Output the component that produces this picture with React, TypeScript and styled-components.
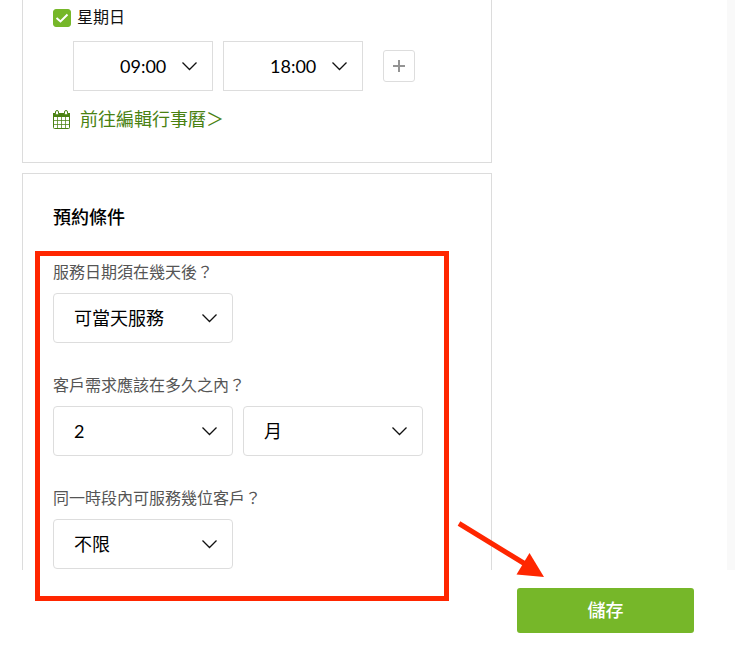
import React, { useState } from "react";
import styled, { createGlobalStyle } from "styled-components";

const GlobalStyle = createGlobalStyle`
  *, *::before, *::after { box-sizing: border-box; }
  body {
    margin: 0;
    background: #fff;
    color: #111;
    font-family: Lato, "Noto Sans CJK TC", sans-serif;
    font-size: 16px;
    line-height: 24px;
  }
  button, select, input { font-family: inherit; }
`;

const Page = styled.div`
  position: relative;
  display: flex;
  flex-direction: column;
  height: 100vh;
  overflow: hidden;
`;

const Body = styled.div`
  display: flex;
  flex: 1;
  min-height: 0;
  overflow: hidden;
`;

const Content = styled.main`
  display: flex;
  flex: 1;
  flex-direction: column;
  gap: 10px;
  padding: 0 22px;
`;

const Gutter = styled.div`
  width: 8px;
  background: #f9f9f9;
`;

const Card = styled.section<{ $continued?: boolean }>`
  width: 100%;
  max-width: 470px;
  flex-shrink: 0;
  padding: ${(p) => (p.$continued ? "5px 30px 31px" : "29px 30px 31px")};
  border: 1px solid #dcdcdc;
  border-top-width: ${(p) => (p.$continued ? "0" : "1px")};
  background: #fff;
`;

const DayLabel = styled.label`
  display: flex;
  align-items: flex-end;
  gap: 6px;
`;

const CheckWrap = styled.span`
  display: grid;
  width: 18px;
  height: 20px;
  > * { grid-area: 1 / 1; }
  svg { pointer-events: none; }
`;

const CheckInput = styled.input`
  appearance: none;
  width: 18px;
  height: 18px;
  margin: 0;
  border: 1px solid #76b729;
  border-radius: 3px;
  background: #fff;
  &:checked { background: #76b729; }
`;

const TimeRow = styled.div`
  display: flex;
  align-items: center;
  gap: 10px;
  padding: 12px 20px 16px;
`;

const SelectWrap = styled.span<{ $width: number }>`
  display: grid;
  align-items: center;
  width: ${(p) => p.$width}px;
  > * { grid-area: 1 / 1; }
  svg {
    justify-self: end;
    margin-right: 15px;
    pointer-events: none;
  }
`;

const SelectBox = styled.select<{ $time?: boolean }>`
  appearance: none;
  width: 100%;
  height: 50px;
  padding: 0 36px 0 ${(p) => (p.$time ? "46px" : "20px")};
  border: 1px solid #ddd;
  border-radius: ${(p) => (p.$time ? "0" : "4px")};
  background: #fff;
  color: #000;
  font-size: 18px;
`;

const AddButton = styled.button`
  display: grid;
  place-items: center;
  width: 32px;
  height: 32px;
  margin-left: 10px;
  padding: 0;
  border: 1px solid #ddd;
  border-radius: 3px;
  background: #fff;
  color: #888;
`;

const CalendarLink = styled.a`
  display: inline-flex;
  align-items: center;
  gap: 9px;
  color: #4a8212;
  font-size: 18px;
  text-decoration: none;
  vertical-align: top;
`;

const Title = styled.h2`
  margin: 0 0 29px;
  color: #000;
  font-size: 18px;
  font-weight: 500;
  line-height: 28px;
`;

const Fields = styled.div`
  display: flex;
  flex-direction: column;
  gap: 30px;
`;

const Field = styled.div`
  display: flex;
  flex-direction: column;
  gap: 9px;
`;

const FieldLabel = styled.label`
  color: #555;
`;

const FieldRow = styled.div`
  display: flex;
  gap: 10px;
`;

const Footer = styled.footer`
  display: flex;
  justify-content: flex-end;
  padding: 18px 41px 14px;
`;

const SaveButton = styled.button`
  width: 177px;
  height: 45px;
  padding: 0 0 3px;
  border: 0;
  border-radius: 3px;
  background: #76b729;
  color: #fff;
  font-size: 18px;
  font-weight: 500;
`;

const Highlight = styled.div`
  position: absolute;
  top: 251px;
  left: 35px;
  width: 414px;
  height: 350px;
  border: 5px solid #ff2600;
  pointer-events: none;
`;

const Arrow = styled.svg`
  position: absolute;
  top: 520px;
  left: 456px;
  pointer-events: none;
`;

type PickerProps = {
  id?: string;
  label?: string;
  options: string[];
  width: number;
  time?: boolean;
};

function Picker({ id, label, options, width, time }: PickerProps) {
  const [value, setValue] = useState(options[0]);
  return (
    <SelectWrap $width={width}>
      <SelectBox
        id={id}
        aria-label={label}
        $time={time}
        value={value}
        onChange={(e) => setValue(e.target.value)}
      >
        {options.map((o) => (
          <option key={o}>{o}</option>
        ))}
      </SelectBox>
      <svg width="17" height="10" viewBox="0 0 17 10" fill="none" aria-hidden="true">
        <path d="M1.5 1.5 8.5 8.5 15.5 1.5" stroke="#111" strokeWidth="1.3" />
      </svg>
    </SelectWrap>
  );
}

function CalendarIcon() {
  return (
    <svg width="18" height="19" viewBox="0 0 18 19" fill="none" aria-hidden="true">
      <path d="M0 3h17v4H0z" fill="currentColor" />
      <rect x="0.5" y="3.5" width="16" height="15" rx="1" stroke="currentColor" />
      <path
        d="M4.5 7v11M8.5 7v11M12.5 7v11M1 10.5h15M1 14.5h15"
        stroke="currentColor"
        strokeOpacity="0.75"
      />
      <rect x="2.5" y="0.5" width="3" height="4.5" rx="1.5" fill="#fff" stroke="currentColor" />
      <rect x="11.5" y="0.5" width="3" height="4.5" rx="1.5" fill="#fff" stroke="currentColor" />
    </svg>
  );
}

export default function App() {
  return (
    <>
      <GlobalStyle />
      <Page>
        <Body>
          <Content>
            <Card $continued>
              <DayLabel>
                <CheckWrap>
                  <CheckInput type="checkbox" defaultChecked />
                  <svg width="18" height="18" viewBox="0 0 18 18" fill="none" aria-hidden="true">
                    <path d="M3.5 9 7.5 12.5 14.5 5.5" stroke="#fff" strokeWidth="2" />
                  </svg>
                </CheckWrap>
                星期日
              </DayLabel>
              <TimeRow>
                <Picker label="開始時間" options={["09:00", "10:00"]} width={140} time />
                <Picker label="結束時間" options={["18:00", "19:00"]} width={140} time />
                <AddButton type="button" aria-label="新增時段">
                  <svg width="12" height="12" viewBox="0 0 12 12" aria-hidden="true">
                    <path d="M6 0v12M0 6h12" stroke="currentColor" strokeWidth="2" strokeOpacity="0.9" />
                  </svg>
                </AddButton>
              </TimeRow>
              <CalendarLink href="#calendar">
                <CalendarIcon />
                前往編輯行事曆＞
              </CalendarLink>
            </Card>
            <Card>
              <Title>預約條件</Title>
              <Fields>
                <Field>
                  <FieldLabel htmlFor="lead">服務日期須在幾天後？</FieldLabel>
                  <Picker id="lead" options={["可當天服務", "1", "2"]} width={180} />
                </Field>
                <Field>
                  <FieldLabel htmlFor="range">客戶需求應該在多久之內？</FieldLabel>
                  <FieldRow>
                    <Picker id="range" options={["2", "1", "3"]} width={180} />
                    <Picker label="單位" options={["月", "週"]} width={180} />
                  </FieldRow>
                </Field>
                <Field>
                  <FieldLabel htmlFor="capacity">同一時段內可服務幾位客戶？</FieldLabel>
                  <Picker id="capacity" options={["不限", "1", "2"]} width={180} />
                </Field>
              </Fields>
            </Card>
          </Content>
          <Gutter />
        </Body>
        <Footer>
          <SaveButton type="button">儲存</SaveButton>
        </Footer>
        <Highlight />
        <Arrow width="90" height="60" viewBox="0 0 90 60" aria-hidden="true">
          <path d="M3 3.5 70 44.5" stroke="#ff2600" strokeWidth="5" />
          <path d="M73.5 33 88 57 60.5 54.5z" fill="#ff2600" />
        </Arrow>
      </Page>
    </>
  );
}
